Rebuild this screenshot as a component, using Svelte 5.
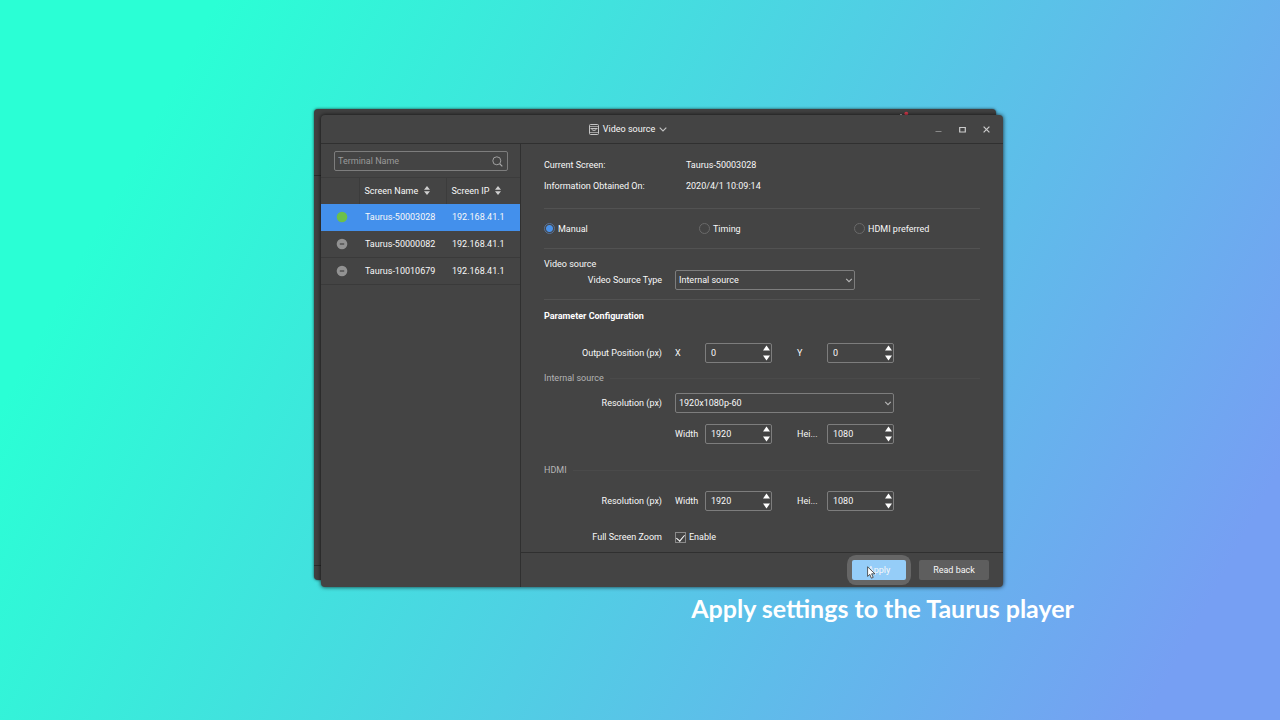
<script lang="ts">
  interface Terminal {
    name: string;
    ip: string;
    online: boolean;
  }

  const terminals: Terminal[] = [
    { name: 'Taurus-50003028', ip: '192.168.41.1', online: true },
    { name: 'Taurus-50000082', ip: '192.168.41.1', online: false },
    { name: 'Taurus-10010679', ip: '192.168.41.1', online: false }
  ];

  const modes = ['Manual', 'Timing', 'HDMI preferred'];

  let search = $state('');
  let selected = $state('Taurus-50003028');
  let mode = $state('Manual');
  let sourceType = $state('Internal source');
  let resolution = $state('1920x1080p-60');
  let fullScreen = $state(true);

  let values = $state({
    x: 0,
    y: 0,
    width: 1920,
    height: 1080,
    hdmiWidth: 1920,
    hdmiHeight: 1080
  });
</script>

{#snippet spin(key: keyof typeof values, label: string)}
  <label class="spin-label" for={key}>{label}</label>
  <div class="spin">
    <input id={key} type="number" bind:value={values[key]} />
    <div class="steps">
      <button aria-label="Increase {label}" onclick={() => values[key]++}>
        <svg width="7" height="6" viewBox="0 0 7 6"><path d="M3.5 0.5L7 5.5H0Z" fill="#fff" /></svg>
      </button>
      <button aria-label="Decrease {label}" onclick={() => values[key]--}>
        <svg width="7" height="6" viewBox="0 0 7 6"><path d="M0 0.5H7L3.5 5.5Z" fill="#fff" /></svg>
      </button>
    </div>
  </div>
{/snippet}

{#snippet sortIcon()}
  <svg width="6" height="9" viewBox="0 0 6 9"><path d="M3 0L6 3.7H0ZM0 5.3H6L3 9Z" fill="#d0d0d0" /></svg>
{/snippet}

{#snippet chevron()}
  <svg class="chevron" width="8" height="5" viewBox="0 0 8 5">
    <path d="M1.2 0.8L4 3.6L6.8 0.8" stroke="#b8b8b8" stroke-width="1.1" fill="none" />
  </svg>
{/snippet}

<main class="stage">
  <div class="windows">
    <div class="back-window">
      <span class="back-line"></span>
      <svg class="alert" width="9" height="5" viewBox="0 0 9 5">
        <path d="M0 3.5h2" stroke="#aaa" />
        <circle cx="6.3" cy="2.6" r="1.9" fill="#d83a4c" />
      </svg>
      <span class="back-line"></span>
    </div>

    <section class="window">
      <header class="titlebar">
        <button class="title">
          <svg width="10" height="11" viewBox="0 0 10 11" fill="none" stroke="#c4c4c4">
            <rect x="0.5" y="0.5" width="9" height="10" rx="1" />
            <path d="M1 2.5H9M1 8.5H9" stroke-width="0.7" />
            <path d="M1.5 4.5H8.5M2.5 5.2L4 6.3H6L7.5 5.2" />
          </svg>
          <span>Video source</span>
          <svg width="8" height="5" viewBox="0 0 8 5">
            <path d="M0.7 0.6L4 4L7.3 0.6" stroke="#c4c4c4" stroke-width="1.1" fill="none" />
          </svg>
        </button>
        <div class="controls">
          <button aria-label="Minimize">
            <svg width="7" height="7" viewBox="0 0 7 7"><path d="M0.5 5.5H6.5" stroke="#8a8a8a" /></svg>
          </button>
          <button aria-label="Maximize">
            <svg width="7" height="7" viewBox="0 0 7 7">
              <path d="M0.7 1.5H6.3V6H0.7Z" stroke="#ccc" stroke-width="1.2" fill="none" />
            </svg>
          </button>
          <button aria-label="Close">
            <svg width="7" height="7" viewBox="0 0 7 7">
              <path d="M0.6 0.6L6.4 6.4M6.4 0.6L0.6 6.4" stroke="#ccc" stroke-width="1.2" />
            </svg>
          </button>
        </div>
      </header>

      <div class="body">
        <aside class="sidebar">
          <div class="search">
            <input type="text" aria-label="Terminal Name" placeholder="Terminal Name" bind:value={search} />
            <svg width="11" height="11" viewBox="0 0 11 11" fill="none" stroke="#aaa">
              <circle cx="4.8" cy="4.8" r="4" stroke-width="0.9" />
              <path d="M7.8 7.8L10.3 10.3" stroke-width="1.2" />
            </svg>
          </div>
          <table>
            <thead>
              <tr>
                <th class="state"></th>
                <th class="name"><span>Screen Name {@render sortIcon()}</span></th>
                <th><span>Screen IP {@render sortIcon()}</span></th>
              </tr>
            </thead>
            <tbody>
              {#each terminals as terminal}
                <tr class:selected={terminal.name === selected} onclick={() => (selected = terminal.name)}>
                  <td class="state">
                    <svg width="12" height="12" viewBox="0 0 12 12">
                      {#if terminal.online}
                        <circle cx="6" cy="6" r="5.3" fill="#6cc04a" />
                      {:else}
                        <circle cx="6" cy="6" r="5.3" fill="#929292" />
                        <path d="M3.8 6H8.2" stroke="#444" stroke-width="1.2" />
                      {/if}
                    </svg>
                  </td>
                  <td>{terminal.name}</td>
                  <td>{terminal.ip}</td>
                </tr>
              {/each}
            </tbody>
          </table>
        </aside>

        <div class="panel">
          <div class="settings">
            <dl>
              <dt>Current Screen:</dt>
              <dd>Taurus-50003028</dd>
              <dt>Information Obtained On:</dt>
              <dd>2020/4/1 10:09:14</dd>
            </dl>

            <div class="modes">
              {#each modes as item}
                <label>
                  <input type="radio" name="mode" value={item} bind:group={mode} />
                  {item}
                </label>
              {/each}
            </div>

            <div class="source">
              <h3>Video source</h3>
              <div class="row">
                <label class="field-label" for="source-type">Video Source Type</label>
                <div class="select">
                  <select id="source-type" bind:value={sourceType}>
                    <option>Internal source</option>
                    <option>HDMI</option>
                  </select>
                  {@render chevron()}
                </div>
              </div>
            </div>

            <h2>Parameter Configuration</h2>
            <div class="row">
              <span class="field-label">Output Position (px)</span>
              {@render spin('x', 'X')}
              {@render spin('y', 'Y')}
            </div>

            <h3 class="group internal">Internal source</h3>
            <div class="row">
              <label class="field-label" for="resolution">Resolution (px)</label>
              <div class="select wide">
                <select id="resolution" bind:value={resolution}>
                  <option>1920x1080p-60</option>
                  <option>1280x720p-60</option>
                </select>
                {@render chevron()}
              </div>
            </div>
            <div class="row size">
              <span class="field-label"></span>
              {@render spin('width', 'Width')}
              {@render spin('height', 'Hei...')}
            </div>

            <h3 class="group hdmi">HDMI</h3>
            <div class="row">
              <span class="field-label">Resolution (px)</span>
              {@render spin('hdmiWidth', 'Width')}
              {@render spin('hdmiHeight', 'Hei...')}
            </div>

            <div class="row zoom">
              <span class="field-label">Full Screen Zoom</span>
              <label class="check">
                <input type="checkbox" bind:checked={fullScreen} />
                Enable
              </label>
            </div>
          </div>

          <footer>
            <div class="apply-wrap">
              <button class="apply">Apply</button>
              <svg class="cursor" width="9" height="13" viewBox="0 0 9 13">
                <path
                  d="M0.6 0.8V10.4L2.8 8.4L4.4 12.2L6.2 11.4L4.6 7.8H7.9Z"
                  fill="#fff"
                  stroke="#333"
                  stroke-width="0.8"
                />
              </svg>
            </div>
            <button>Read back</button>
          </footer>
        </div>
      </div>
    </section>
  </div>

  <p class="caption">Apply settings to the Taurus player</p>
</main>

<style>
  :global(body) {
    margin: 0;
  }

  .stage,
  .stage :global(*) {
    box-sizing: border-box;
  }

  .stage {
    min-height: 100vh;
    padding-top: 115px;
    background: linear-gradient(118deg, #2affd5 13%, #769ff3 92%);
    color: #f8f8f8;
    font-family: Roboto, 'Noto Sans', sans-serif;
    font-size: 9px;
    line-height: 14px;
  }

  button,
  input,
  select {
    font: inherit;
    color: inherit;
  }

  button {
    padding: 0;
    border: none;
    background: none;
    cursor: pointer;
  }

  svg {
    display: block;
    flex: none;
  }

  h2,
  h3,
  dl,
  dd,
  p {
    margin: 0;
  }

  .windows {
    position: relative;
    margin: 0 277px 0 321px;
  }

  .back-window {
    position: absolute;
    inset: -6px 7px 7px -7px;
    display: flex;
    flex-direction: column;
    justify-content: space-between;
    padding: 66px 0 14px;
    background: #404040;
    border-radius: 4px;
    box-shadow: 0 0 3px rgba(0, 0, 0, 0.7);
  }

  .back-line {
    height: 1px;
    background: #2c2c2c;
  }

  .alert {
    position: absolute;
    top: 2px;
    right: 87px;
  }

  .window {
    position: relative;
    background: #444;
    border-radius: 4px;
    box-shadow: 0 0 4px rgba(0, 0, 0, 0.8);
  }

  .titlebar {
    display: flex;
    align-items: center;
    height: 29px;
    padding-right: 13px;
    border-bottom: 1px solid #303030;
  }

  .title {
    display: flex;
    align-items: center;
    gap: 4px;
    margin: 0 auto;
  }

  .controls {
    display: flex;
    gap: 17px;
  }

  .body {
    display: flex;
  }

  .sidebar {
    width: 200px;
    border-right: 1px solid #303030;
  }

  .search {
    display: flex;
    align-items: center;
    height: 20px;
    margin: 7px 12px 6px 13px;
    padding-right: 4px;
    border: 1px solid #7d7d7d;
    border-radius: 2px;
  }

  .search input {
    flex: 1;
    min-width: 0;
    padding: 0 3px;
    border: none;
    outline: none;
    background: none;
  }

  .search input::placeholder {
    color: #999;
    opacity: 1;
  }

  table {
    width: 100%;
    border-collapse: collapse;
    table-layout: fixed;
    text-align: left;
  }

  th {
    height: 26px;
    padding: 0 0 0 5px;
    border: 1px solid #3c3c3c;
    border-width: 1px 0 0 1px;
    font-weight: 400;
  }

  th.state {
    width: 38px;
    border-left: none;
  }

  th.name {
    width: 87px;
  }

  th span {
    display: flex;
    align-items: center;
    gap: 6px;
  }

  td {
    height: 27px;
    padding: 0 0 0 6px;
    border-bottom: 1px solid #3a3a3a;
    white-space: nowrap;
  }

  td.state {
    padding-left: 15px;
  }

  tr.selected td {
    background: #4390ec;
    border-color: #4390ec;
  }

  .panel {
    flex: 1;
    min-width: 0;
  }

  .settings {
    padding: 11px 23px 5px;
  }

  dl {
    display: grid;
    grid-template-columns: 142px 1fr;
    padding-bottom: 11px;
    border-bottom: 1px solid #525252;
    line-height: 21px;
  }

  .modes {
    display: grid;
    grid-template-columns: 1fr 1fr 126px;
    align-items: center;
    height: 40px;
    border-bottom: 1px solid #525252;
  }

  .modes label,
  .check {
    display: flex;
    align-items: center;
    gap: 3px;
  }

  .modes input {
    appearance: none;
    width: 11px;
    height: 11px;
    margin: 0;
    border: 1px solid #6a6a6a;
    border-radius: 50%;
  }

  .modes input:checked {
    border-color: #56729a;
    background: radial-gradient(circle, #4a92ea 3px, transparent 4px);
  }

  .source {
    padding: 9px 0;
    border-bottom: 1px solid #525252;
  }

  h3 {
    font-size: 9px;
    font-weight: 400;
    line-height: 12px;
  }

  h2 {
    margin: 9px 0 20px;
    font-size: 9px;
    font-weight: 700;
    line-height: 14px;
    color: #fff;
  }

  .row {
    display: flex;
    align-items: center;
    height: 20px;
  }

  .field-label {
    width: 118px;
    margin-right: 13px;
    text-align: right;
  }

  .select {
    position: relative;
    width: 180px;
  }

  .select.wide {
    width: 219px;
  }

  select {
    display: block;
    appearance: none;
    width: 100%;
    height: 20px;
    padding: 0 3px;
    border: 1px solid #7d7d7d;
    border-radius: 2px;
    background: #444;
  }

  .chevron {
    position: absolute;
    top: 8px;
    right: 2px;
    pointer-events: none;
  }

  .spin-label {
    width: 30px;
    white-space: nowrap;
  }

  .spin {
    display: flex;
    width: 67px;
    height: 20px;
    margin-right: 25px;
    padding-right: 1px;
    border: 1px solid #7d7d7d;
    border-radius: 2px;
  }

  .spin input {
    flex: 1;
    min-width: 0;
    padding: 0 5px;
    border: none;
    outline: none;
    background: none;
    appearance: textfield;
  }

  .spin input::-webkit-inner-spin-button {
    appearance: none;
    margin: 0;
  }

  .steps {
    display: flex;
    flex-direction: column;
    justify-content: space-between;
    padding: 1px 0;
  }

  .group {
    display: flex;
    align-items: center;
    gap: 6px;
    line-height: 14px;
    color: #b4b4b4;
  }

  .group::after {
    content: '';
    flex: 1;
    height: 1px;
    background: #4a4a4a;
  }

  .internal {
    margin: 8px 0;
  }

  .size {
    margin-top: 11px;
  }

  .hdmi {
    margin: 19px 0 14px;
  }

  .zoom {
    margin-top: 16px;
  }

  .check input {
    appearance: none;
    display: flex;
    justify-content: center;
    width: 11px;
    height: 11px;
    margin: 0;
    border: 1px solid #8a8a8a;
  }

  /* tick drawn as two borders of a rotated box */
  .check input:checked::before {
    content: '';
    width: 4px;
    height: 7px;
    border: solid #fff;
    border-width: 0 1px 1px 0;
    transform: rotate(40deg);
  }

  footer {
    display: flex;
    justify-content: flex-end;
    gap: 13px;
    padding: 7px 14px;
    border-top: 1px solid #303030;
  }

  footer button {
    display: block;
    width: 70px;
    height: 20px;
    border-radius: 2px;
    background: #5e5e5e;
  }

  .apply-wrap {
    position: relative;
    border-radius: 4px;
    box-shadow: 0 0 0 5px #666;
    background: #666;
  }

  footer .apply {
    width: 54px;
    background: #95cdf8;
  }

  .cursor {
    position: absolute;
    top: 6px;
    left: 15px;
  }

  .caption {
    margin: 6px 0 0 54%;
    font-family: Lato, sans-serif;
    font-size: 25px;
    font-weight: 700;
    line-height: 30px;
    color: #fff;
    white-space: nowrap;
  }
</style>
